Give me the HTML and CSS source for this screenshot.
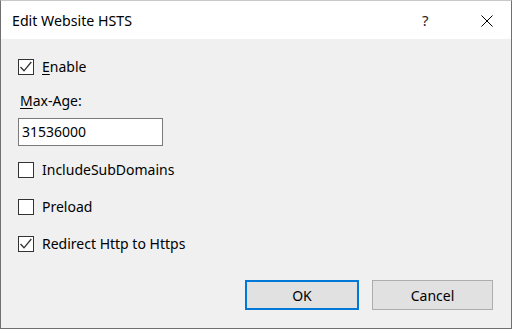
FILE: index.html
```html
<!DOCTYPE html>
<html>
<head>
<meta charset="utf-8">
<link rel="stylesheet" href="styles.css">
</head>
<body>
<div class="window">
  <div class="titlebar">
    <span class="title">Edit Website HSTS</span>
    <span class="help">?</span>
    <span class="close"><svg width="12" height="12" viewBox="0 0 12 12"><path d="M0.5 0.5L11.5 11.5M11.5 0.5L0.5 11.5" stroke="#000" stroke-width="1" fill="none"/></svg></span>
  </div>
  <div class="content">
    <label class="check first">
      <span class="box"><svg width="14" height="14" viewBox="0 0 14 14"><path d="M1.5 7L5 10.8L12.3 2" stroke="#333" stroke-width="1.3" fill="none"/></svg></span>
      <span class="lbl"><u>E</u>nable</span>
    </label>
    <div class="field-label"><u>M</u>ax-Age:</div>
    <div class="textbox">31536000</div>
    <label class="check sub">
      <span class="box"></span>
      <span class="lbl">IncludeSubDomains</span>
    </label>
    <label class="check row">
      <span class="box"></span>
      <span class="lbl">Preload</span>
    </label>
    <label class="check row">
      <span class="box"><svg width="14" height="14" viewBox="0 0 14 14"><path d="M1.5 7L5 10.8L12.3 2" stroke="#333" stroke-width="1.3" fill="none"/></svg></span>
      <span class="lbl">Redirect Http to Https</span>
    </label>
  </div>
  <div class="buttons">
    <div class="btn ok">OK</div>
    <div class="btn cancel">Cancel</div>
  </div>
</div>
</body>
</html>
```
FILE: styles.css
```css
* { box-sizing: border-box; }
html, body { margin: 0; padding: 0; }
body {
  font-family: "Noto Sans", "Open Sans", sans-serif;
  font-size: 14px;
  color: #000;
  background: #f0f0f0;
}
.window {
  width: 512px;
  height: 329px;
  background: #f0f0f0;
  border: 1px solid #707070;
  border-top: 1px solid #c8c8c8;
  display: flex;
  flex-direction: column;
}
.titlebar {
  height: 38px;
  background: #fff;
  display: flex;
  align-items: center;
  padding-left: 11px;
  flex: none;
}
.title {
  flex: 1;
  font-size: 14.2px;
  margin-top: 1px;
}
.help {
  width: 14px;
  margin-right: 45px;
  font-size: 15px;
  color: #222;
}
.close {
  width: 12px;
  margin-right: 18px;
  display: flex;
  margin-top: 2px;
}
.content {
  padding-left: 17px;
  display: flex;
  flex-direction: column;
  align-items: flex-start;
  flex: 1;
}
.check {
  display: flex;
  align-items: center;
  height: 16px;
}
.check.first { margin-top: 20px; }
.check.sub { margin-top: 16px; }
.check.row { margin-top: 21px; }
.box {
  width: 16px;
  height: 16px;
  border: 1px solid #333;
  background: #fff;
  display: flex;
  align-items: center;
  justify-content: center;
}
.lbl {
  margin-left: 8px;
  line-height: 16px;
}
u { text-decoration: underline; text-underline-offset: 2px; }
.field-label {
  margin-top: 17px;
  margin-left: 2px;
  line-height: 18px;
}
.textbox {
  margin-top: 8px;
  width: 145px;
  height: 28px;
  background: #fff;
  border: 1px solid #7a7a7a;
  padding-left: 3px;
  line-height: 26px;
}
.buttons {
  display: flex;
  justify-content: flex-end;
  gap: 13px;
  padding-right: 18px;
  padding-bottom: 18px;
  flex: none;
}
.btn {
  height: 30px;
  background: #e1e1e1;
  border: 1px solid #adadad;
  display: flex;
  align-items: center;
  justify-content: center;
}
.ok {
  width: 114px;
  border: 2px solid #0078d7;
}
.cancel {
  width: 121px;
}
```
